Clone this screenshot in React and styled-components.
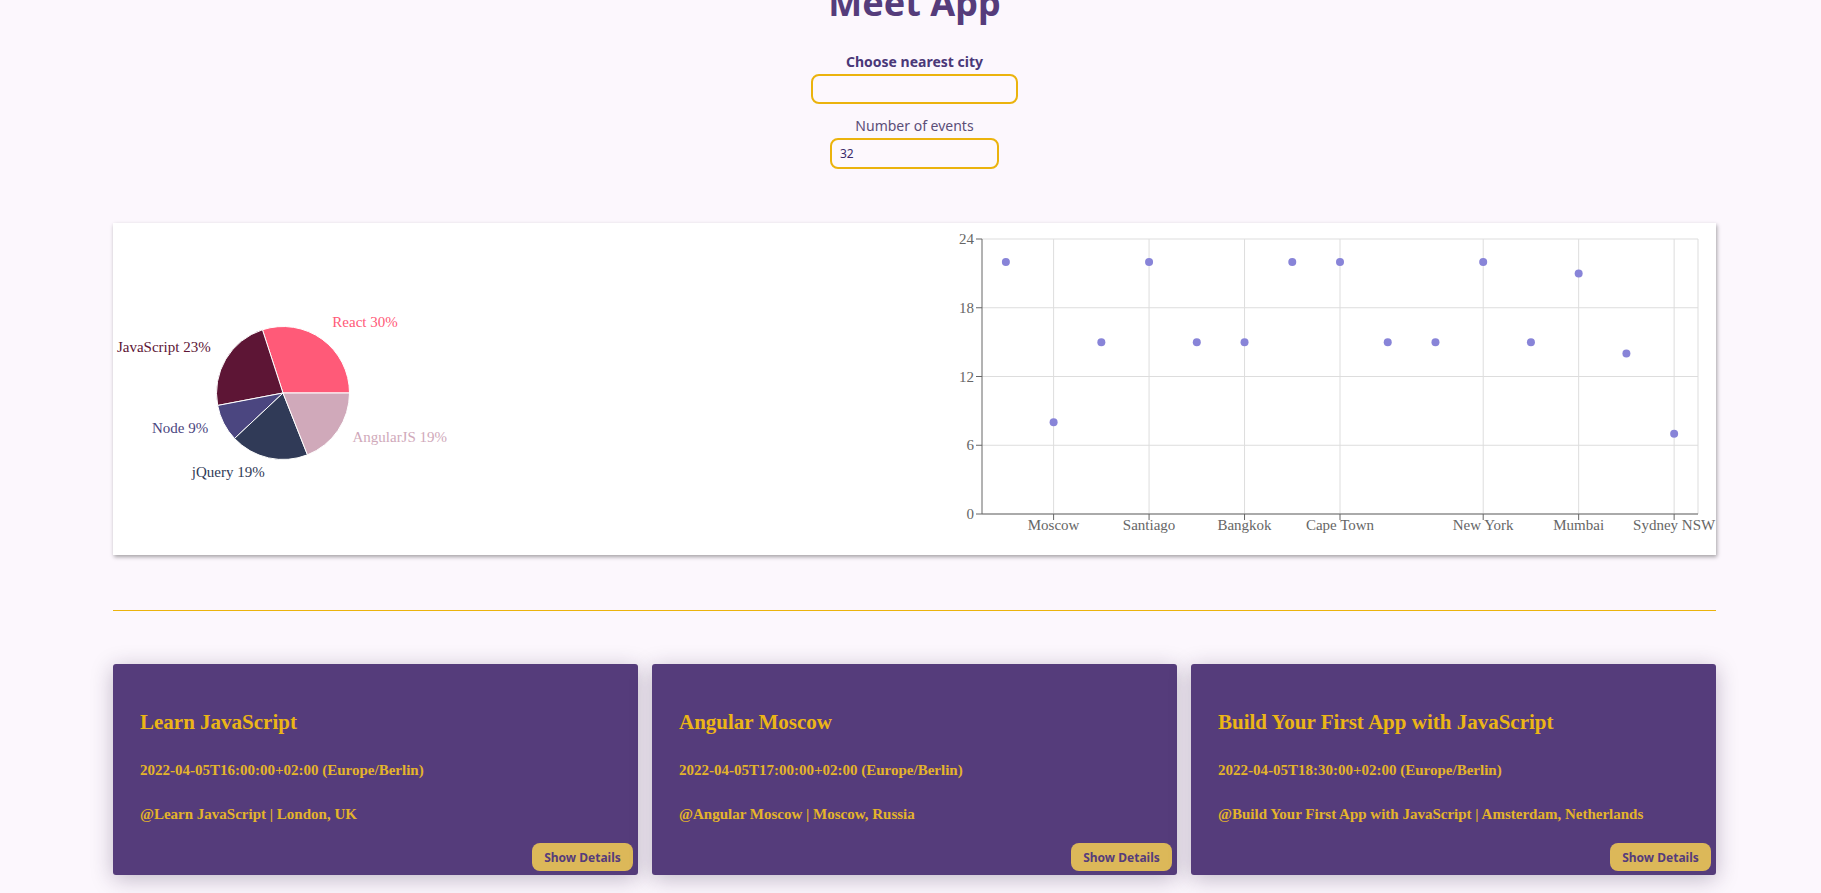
import React from 'react';
import styled, { createGlobalStyle } from 'styled-components';

const GlobalStyle = createGlobalStyle`
  body {
    margin: 0;
    background: #fcf7fd;
    font-family: "Noto Sans", "Open Sans", sans-serif;
  }
`;

const Page = styled.div`
  padding: 0 105px 60px 113px;
  display: flex;
  flex-direction: column;
`;

const Title = styled.h1`
  margin: -15px 0 0;
  text-align: center;
  font-size: 36px;
  line-height: 36px;
  font-weight: 700;
  color: #553c7b;
`;

const Field = styled.div`
  display: flex;
  flex-direction: column;
  align-items: center;
  margin-top: ${props => props.$top}px;
`;

const Label = styled.label`
  font-size: 14px;
  font-weight: ${props => (props.$bold ? 700 : 400)};
  line-height: 20px;
  color: ${props => (props.$bold ? '#4a3878' : '#5b4e78')};
`;

const Input = styled.input`
  box-sizing: border-box;
  width: ${props => props.$w}px;
  height: ${props => props.$h}px;
  margin-top: 2px;
  padding: 0 8px;
  border: 2px solid #ebb30d;
  border-radius: 8px;
  background: #fdf8fd;
  font-family: "Noto Sans", sans-serif;
  font-size: 12px;
  color: #3b2c6b;
  outline: none;
`;

const ChartBox = styled.div`
  margin-top: 54px;
  height: 332px;
  display: flex;
  background: #fff;
  box-shadow: 1px 2px 4px rgba(0, 0, 0, 0.35);
`;

const ChartText = styled.text`
  font-family: "Liberation Serif", serif;
  font-size: 15px;
`;

const Divider = styled.hr`
  margin: 55px 0 0;
  border: none;
  border-top: 1px solid #ebb30d;
`;

const CardGrid = styled.div`
  margin-top: 53px;
  display: grid;
  grid-template-columns: repeat(3, 1fr);
  gap: 14px;
`;

const Card = styled.div`
  background: #553c7b;
  border-radius: 3px;
  box-shadow: 0 4px 22px rgba(40, 20, 60, 0.28);
  padding: 46px 5px 4px 27px;
  display: flex;
  flex-direction: column;
  font-family: "Liberation Serif", serif;
  color: #e4b42a;
`;

const CardTitle = styled.h2`
  margin: 0;
  font-size: 21px;
  line-height: 24px;
  font-weight: 700;
  color: #ebb516;
`;

const CardLine = styled.p`
  margin: ${props => props.$gap}px 0 0;
  font-size: 15px;
  line-height: 18px;
  font-weight: 700;
`;

const DetailsButton = styled.button`
  align-self: flex-end;
  margin-top: 20px;
  width: 101px;
  height: 28px;
  border: none;
  border-radius: 8px;
  background: #dcb859;
  color: #553c7b;
  font-family: "Noto Sans", sans-serif;
  font-size: 12px;
  font-weight: 700;
`;

const pieData = [
  { name: 'React', value: 30, color: '#ff5a78' },
  { name: 'JavaScript', value: 23, color: '#5d1535' },
  { name: 'Node', value: 9, color: '#4b4680' },
  { name: 'jQuery', value: 19, color: '#303a57' },
  { name: 'AngularJS', value: 19, color: '#d0a9ba' },
];

const points = [22, 8, 15, 22, 15, 15, 22, 22, 15, 15, 22, 15, 21, 14, 7];
const cityTicks = [
  { i: 1, name: 'Moscow' },
  { i: 3, name: 'Santiago' },
  { i: 5, name: 'Bangkok' },
  { i: 7, name: 'Cape Town' },
  { i: 10, name: 'New York' },
  { i: 12, name: 'Mumbai' },
  { i: 14, name: 'Sydney NSW' },
];

const events = [
  {
    id: 1,
    summary: 'Learn JavaScript',
    start: '2022-04-05T16:00:00+02:00',
    location: 'London, UK',
  },
  {
    id: 2,
    summary: 'Angular Moscow',
    start: '2022-04-05T17:00:00+02:00',
    location: 'Moscow, Russia',
  },
  {
    id: 3,
    summary: 'Build Your First App with JavaScript',
    start: '2022-04-05T18:30:00+02:00',
    location: 'Amsterdam, Netherlands',
  },
];

const rad = deg => (deg * Math.PI) / 180;

function GenrePie() {
  const cx = 170;
  const cy = 170;
  const r = 66.5;
  const total = pieData.reduce((s, d) => s + d.value, 0);
  let angle = 0;

  return (
    <svg width="801" height="332">
      {pieData.map(d => {
        const a0 = angle;
        const a1 = angle + (d.value / total) * 360;
        angle = a1;
        const mid = (a0 + a1) / 2;
        const x0 = cx + r * Math.cos(rad(a0));
        const y0 = cy - r * Math.sin(rad(a0));
        const x1 = cx + r * Math.cos(rad(a1));
        const y1 = cy - r * Math.sin(rad(a1));
        const lx = cx + 84 * Math.cos(rad(mid));
        const ly = cy - 84 * Math.sin(rad(mid)) - 3;
        const large = a1 - a0 > 180 ? 1 : 0;
        return (
          <g key={d.name}>
            <path
              d={`M${cx},${cy} L${x0},${y0} A${r},${r} 0 ${large} 0 ${x1},${y1} Z`}
              fill={d.color}
              stroke="#fff"
              strokeWidth="1"
            />
            <ChartText
              x={lx}
              y={ly}
              fill={d.color}
              textAnchor={lx > cx ? 'start' : 'end'}
              dominantBaseline="central"
            >
              {`${d.name} ${d.value}%`}
            </ChartText>
          </g>
        );
      })}
    </svg>
  );
}

function EventsScatter() {
  const left = 68;
  const right = 784;
  const top = 16;
  const bottom = 291;
  const band = (right - left) / points.length;
  const xOf = i => left + band * (i + 0.5);
  const yOf = v => bottom - ((bottom - top) * v) / 24;
  const yTicks = [0, 6, 12, 18, 24];

  return (
    <svg width="802" height="332">
      {yTicks.map(v => (
        <line key={v} x1={left} x2={right} y1={yOf(v)} y2={yOf(v)} stroke="#ddd" />
      ))}
      {cityTicks.map(t => (
        <line key={t.name} x1={xOf(t.i)} x2={xOf(t.i)} y1={top} y2={bottom} stroke="#ddd" />
      ))}
      <line x1={right} x2={right} y1={top} y2={bottom} stroke="#ddd" />

      <line x1={left} x2={left} y1={top} y2={bottom} stroke="#666" />
      <line x1={left} x2={right} y1={bottom} y2={bottom} stroke="#666" />

      {yTicks.map(v => (
        <g key={v}>
          <line x1={left - 6} x2={left} y1={yOf(v)} y2={yOf(v)} stroke="#666" />
          <ChartText x={left - 8} y={yOf(v)} fill="#666" textAnchor="end" dominantBaseline="central">
            {v}
          </ChartText>
        </g>
      ))}
      {cityTicks.map(t => (
        <g key={t.name}>
          <line x1={xOf(t.i)} x2={xOf(t.i)} y1={bottom} y2={bottom + 6} stroke="#666" />
          <ChartText x={xOf(t.i)} y={bottom + 11} fill="#666" textAnchor="middle" dominantBaseline="central">
            {t.name}
          </ChartText>
        </g>
      ))}

      {points.map((v, i) => (
        <circle key={i} cx={xOf(i)} cy={yOf(v)} r="4" fill="#8884d8" />
      ))}
    </svg>
  );
}

function App() {
  return (
    <>
      <GlobalStyle />
      <Page>
        <Title>Meet App</Title>

        <Field $top={31}>
          <Label $bold>Choose nearest city</Label>
          <Input $w={207} $h={30} type="text" />
        </Field>

        <Field $top={12}>
          <Label>Number of events</Label>
          <Input $w={169} $h={31} type="number" defaultValue={32} />
        </Field>

        <ChartBox>
          <GenrePie />
          <EventsScatter />
        </ChartBox>

        <Divider />

        <CardGrid>
          {events.map(ev => (
            <Card key={ev.id}>
              <CardTitle>{ev.summary}</CardTitle>
              <CardLine $gap={27}>{ev.start} (Europe/Berlin)</CardLine>
              <CardLine $gap={26}>@{ev.summary} | {ev.location}</CardLine>
              <DetailsButton>Show Details</DetailsButton>
            </Card>
          ))}
        </CardGrid>
      </Page>
    </>
  );
}

export default App;
